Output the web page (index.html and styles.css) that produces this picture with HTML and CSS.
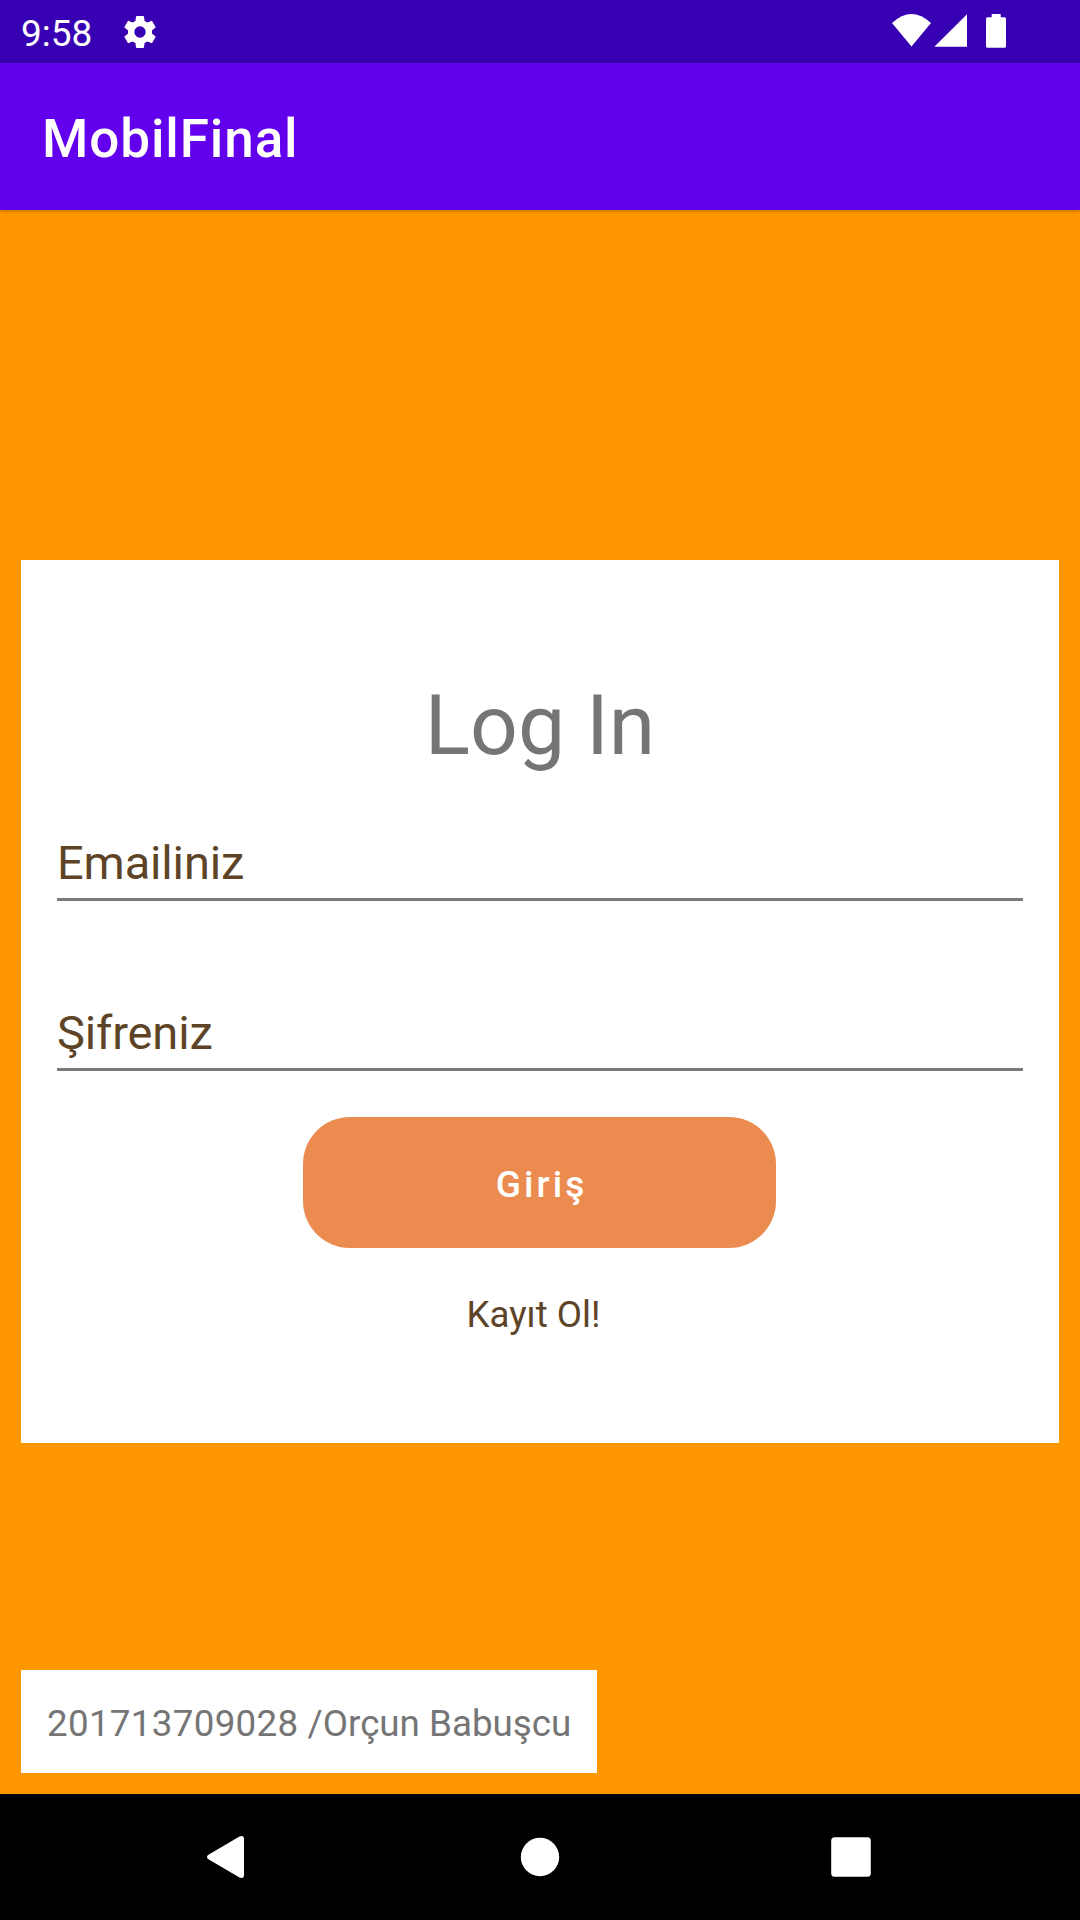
FILE: index.html
```html
<!DOCTYPE html>
<html lang="tr">
<head>
<meta charset="utf-8">
<title>MobilFinal</title>
<link rel="stylesheet" href="styles.css">
</head>
<body>
<header class="status">
  <span class="clock">9:58</span>
  <svg class="gear" width="40" height="40" viewBox="0 0 24 24"><path fill="#fff" d="M19.14 12.94c.04-.3.06-.61.06-.94 0-.32-.02-.64-.07-.94l2.03-1.58a.49.49 0 0 0 .12-.61l-1.92-3.32a.488.488 0 0 0-.59-.22l-2.39.96c-.5-.38-1.03-.7-1.62-.94l-.36-2.54a.484.484 0 0 0-.48-.41h-3.84c-.24 0-.43.17-.47.41l-.36 2.54c-.59.24-1.13.57-1.62.94l-2.39-.96c-.22-.08-.47 0-.59.22L2.74 8.87c-.12.21-.08.47.12.61l2.03 1.58c-.05.3-.09.63-.09.94s.02.64.07.94l-2.03 1.58a.49.49 0 0 0-.12.61l1.92 3.32c.12.22.37.29.59.22l2.39-.96c.5.38 1.03.7 1.62.94l.36 2.54c.05.24.24.41.48.41h3.84c.24 0 .44-.17.47-.41l.36-2.54c.59-.24 1.13-.56 1.62-.94l2.39.96c.22.08.47 0 .59-.22l1.92-3.32c.12-.22.07-.47-.12-.61l-2.01-1.58zM12 15.4A3.4 3.4 0 1 1 12 8.6a3.4 3.4 0 0 1 0 6.8z"/></svg>
  <svg class="signals" width="120" height="40" viewBox="0 0 120 40" fill="#fff"><path d="M0 9Q19.5 -9 39 9L19.500 32.600z"/><path d="M75 .3V32.800H42.300z"/><path d="M95.500 3.300H99.700V0H108.700V3.300H112.500Q114 3.300 114 4.800V32.300Q114 33.800 112.500 33.800H95.500Q94 33.800 94 32.300V4.800Q94 3.300 95.500 3.300z"/></svg>
</header>
<div class="appbar"><h1 class="title">MobilFinal</h1></div>
<main class="screen">
  <section class="card">
    <h2 class="heading">Log In</h2>
    <div class="field">Emailiniz</div>
    <div class="field second">Şifreniz</div>
    <button class="login">Giriş</button>
    <a class="register">Kayıt Ol!</a>
  </section>
  <footer class="student"><span class="number">201713709028</span> /Orçun Babuşcu</footer>
</main>
<nav class="navbar">
  <svg width="1080" height="126" viewBox="0 0 1080 126" fill="#fff"><path d="M208 61L239.500 42.500q4.500-1.500 4.500 2.500V81q0 4-4.500 2.500L208 65q-2-2 0-4z"/><circle cx="540" cy="63" r="19.200"/><rect x="831.200" y="43.200" width="39.600" height="39.600" rx="3.500"/></svg>
</nav>
</body>
</html>
```
FILE: styles.css
```css
body { margin: 0; width: 1080px; height: 1920px; display: flex; flex-direction: column; font-family: Roboto, sans-serif; background: #ff9800; overflow: hidden; }
.status { height: 63px; background: #3700b3; display: flex; box-sizing: border-box; padding-left: 21px; color: #fff; }
.clock { width: 99px; font-size: 37px; line-height: 67px; }
.gear { margin-top: 11.5px; }
.signals { margin: 14px 0 0 732px; }
.appbar { height: 147px; background: #6200ee; position: relative; box-shadow: 0 1px 4px #0004; }
.title { margin: 0 0 0 42px; font-size: 53px; font-weight: 500; letter-spacing: .9px; line-height: 152px; color: #fff; }
.screen { height: 1584px; box-sizing: border-box; padding: 350px 21px 0; display: flex; flex-direction: column; align-items: flex-start; }
.card { width: 1038px; height: 883px; box-sizing: border-box; padding: 110px 36px 0; background: #fff; display: flex; flex-direction: column; align-items: center; }
.heading { margin: 0; font-size: 84px; line-height: 112px; font-weight: 400; color: #757575; }
.field { width: 966px; height: 119px; box-sizing: border-box; padding-top: 53px; border-bottom: 3px solid #7b7b7b; font-size: 47px; letter-spacing: -.15px; line-height: 55px; color: #5d4427; }
.second { margin-top: 51px; }
.login { margin: 46px 1px 0 0; padding: 3px 0 0 4px; width: 473px; height: 131px; border: 0; border-radius: 47px; background: #ec8b4f; color: #fff; font: 500 37px Roboto, sans-serif; letter-spacing: 3.1px; }
.register { margin: 43px 13px 0 0; font-size: 36.75px; line-height: 48px; color: #5d4427; }
.student { margin-top: 227px; width: 576px; height: 103px; box-sizing: border-box; padding-left: 26px; background: #fff; font-size: 36.75px; line-height: 107px; color: #757575; white-space: nowrap; }
.number { letter-spacing: .3px; }
.navbar { height: 126px; background: #000; }
.navbar svg { display: block; }
```
